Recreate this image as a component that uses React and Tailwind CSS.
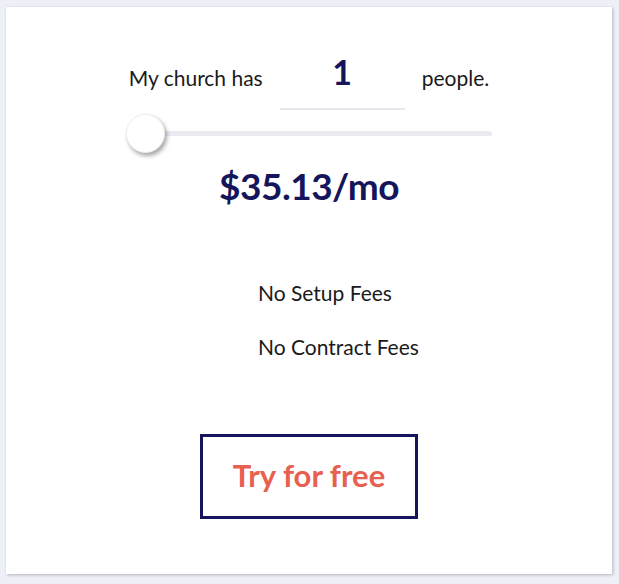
export default function App() {
  return (
    <div className="min-h-screen bg-[#eef0f8] pt-[7px] pl-[6px] pr-[7px]" style={{ fontFamily: "Lato, 'Noto Sans', sans-serif" }}>
      <div className="bg-white h-[567px] shadow-[1px_1px_3px_rgba(0,0,0,0.25)] flex flex-col items-center pt-[39px]">
        <div className="flex items-center gap-[17px] text-[21px] text-[#1a1a1a]">
          <span className="whitespace-nowrap">My church has</span>
          <div className="w-[125px] h-[64px] border-b-2 border-[#e6e8ee] flex items-center justify-center text-[34px] font-bold text-[#15155c] pb-[12px]">1</div>
          <span className="whitespace-nowrap">people.</span>
        </div>
        <div className="relative w-[366px] h-[39px] mt-[4px]">
          <div className="absolute left-[18px] right-0 top-[17px] h-[5px] rounded-full bg-[#e9ebf0]" />
          <div className="absolute left-0 top-0 w-[39px] h-[39px] rounded-full bg-white shadow-[2px_3px_4px_rgba(0,0,0,0.35)] border border-[#eeeeee]" />
        </div>
        <div className="mt-[10px] text-[37px] font-bold text-[#15155c] leading-[46px] tracking-[-0.5px]">$35.13/mo</div>
        <div className="w-[200px] pl-[49px] mt-[72px] flex flex-col gap-[31px] text-[21px] text-[#1a1a1a] leading-[23px] whitespace-nowrap">
          <span>No Setup Fees</span>
          <span>No Contract Fees</span>
        </div>
        <button className="mt-[76px] w-[218px] h-[85px] border-[3px] border-[#15155c] text-[#e8604f] text-[31px] font-bold flex items-center justify-center pb-[3px]">
          Try for free
        </button>
      </div>
    </div>
  );
}
